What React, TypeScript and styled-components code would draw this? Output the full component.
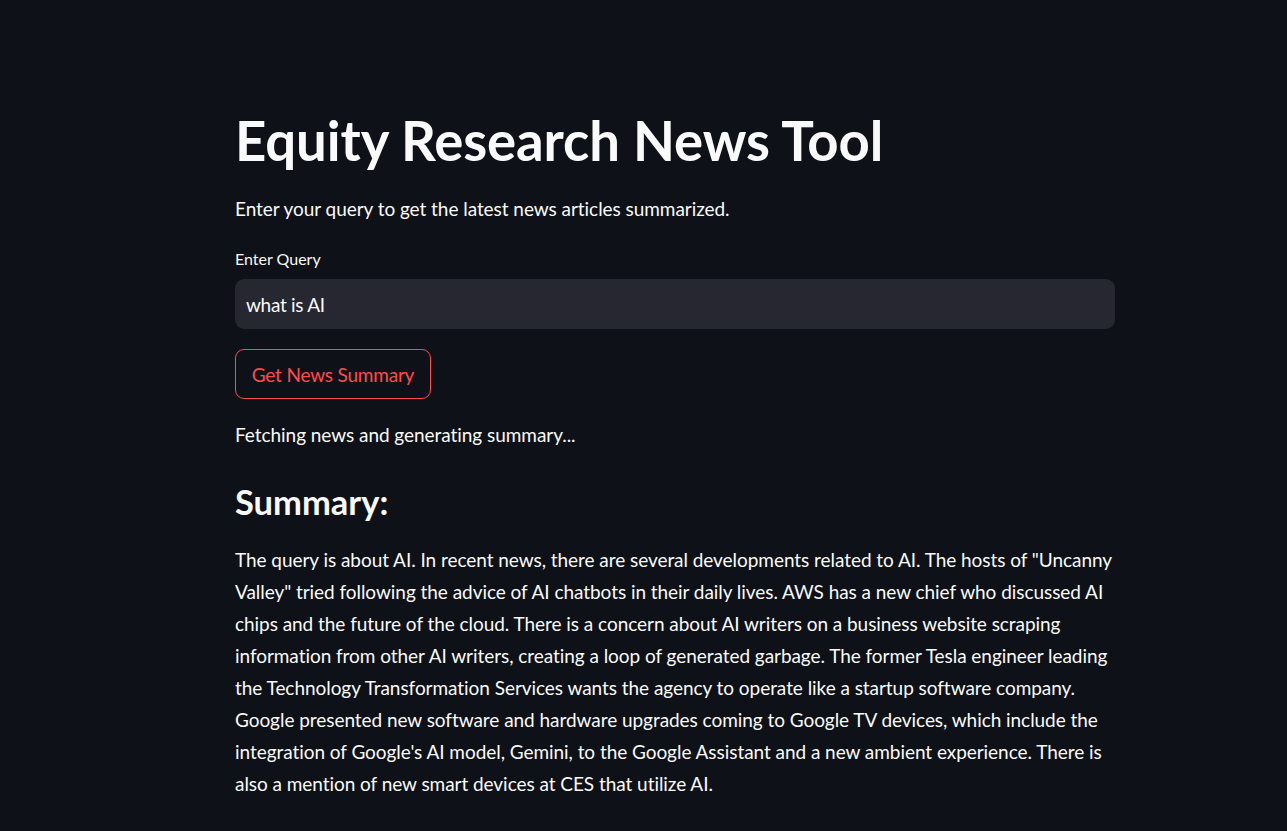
import React from "react";
import styled, { createGlobalStyle } from "styled-components";

const Global = createGlobalStyle`
  html, body { margin: 0; padding: 0; background: #0e1117; }
  body { font-family: Lato, "Noto Sans", sans-serif; color: #fafafa; }
  * { box-sizing: border-box; }
`;

const Page = styled.main`
  min-height: 831px;
  background: #0e1117;
  padding: 107px 0 0 235px;
`;

const Column = styled.div`
  width: 880px;
  display: flex;
  flex-direction: column;
`;

const Title = styled.h1`
  margin: 0;
  font-size: 54.5px;
  font-weight: 700;
  line-height: 66px;
  letter-spacing: -0.1px;
  color: #fafafa;
`;

const Text = styled.p<{ $top?: number }>`
  margin: ${(p) => p.$top ?? 0}px 0 0;
  font-size: 19px;
  line-height: 32px;
  letter-spacing: -0.05px;
  color: #fafafa;
  white-space: nowrap;
`;

const Label = styled.label`
  margin-top: 22px;
  font-size: 16px;
  line-height: 24px;
  letter-spacing: 0;
  color: #fafafa;
`;

const Input = styled.input`
  margin-top: 8px;
  height: 50px;
  width: 100%;
  border: none;
  outline: none;
  border-radius: 9px;
  background: #262730;
  color: #fafafa;
  padding: 0 11px;
  font-family: Lato, "Noto Sans", sans-serif;
  font-size: 19px;
  letter-spacing: -0.3px;
`;

const Button = styled.button`
  margin-top: 20px;
  align-self: flex-start;
  height: 50px;
  width: 196px;
  border: 1px solid #ff4b4b;
  border-radius: 9px;
  background: transparent;
  color: #ff4b4b;
  font-family: Lato, "Noto Sans", sans-serif;
  font-size: 19px;
  letter-spacing: -0.2px;
  cursor: pointer;
`;

const Heading = styled.h3`
  margin: 29px 0 0;
  font-size: 34.5px;
  font-weight: 700;
  line-height: 44px;
  letter-spacing: 0;
  color: #fafafa;
`;

const lines = [
  'The query is about AI. In recent news, there are several developments related to AI. The hosts of "Uncanny',
  'Valley" tried following the advice of AI chatbots in their daily lives. AWS has a new chief who discussed AI',
  "chips and the future of the cloud. There is a concern about AI writers on a business website scraping",
  "information from other AI writers, creating a loop of generated garbage. The former Tesla engineer leading",
  "the Technology Transformation Services wants the agency to operate like a startup software company.",
  "Google presented new software and hardware upgrades coming to Google TV devices, which include the",
  "integration of Google's AI model, Gemini, to the Google Assistant and a new ambient experience. There is",
  "also a mention of new smart devices at CES that utilize AI.",
];

export default function App() {
  return (
    <>
      <Global />
      <Page>
        <Column>
          <Title>Equity Research News Tool</Title>
          <Text $top={20}>Enter your query to get the latest news articles summarized.</Text>
          <Label>Enter Query</Label>
          <Input defaultValue="what is AI" />
          <Button>Get News Summary</Button>
          <Text $top={20}>Fetching news and generating summary...</Text>
          <Heading>Summary:</Heading>
          <Text $top={20}>
            {lines.map((l, i) => (
              <React.Fragment key={i}>
                {l}
                {i < lines.length - 1 && <br />}
              </React.Fragment>
            ))}
          </Text>
        </Column>
      </Page>
    </>
  );
}
